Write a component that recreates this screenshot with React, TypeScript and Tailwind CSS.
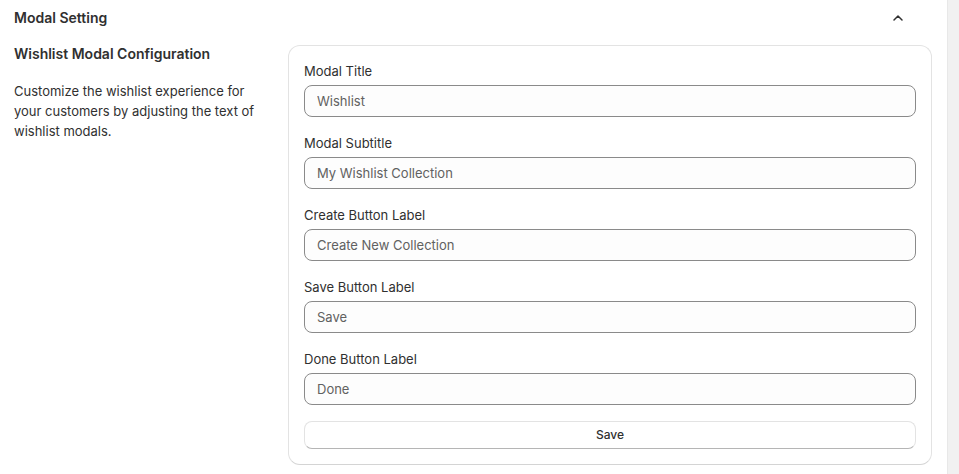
import { ChevronUp } from 'lucide-react';

const fields = [
  { label: 'Modal Title', value: 'Wishlist' },
  { label: 'Modal Subtitle', value: 'My Wishlist Collection' },
  { label: 'Create Button Label', value: 'Create New Collection' },
  { label: 'Save Button Label', value: 'Save' },
  { label: 'Done Button Label', value: 'Done' },
];

export default function App() {
  return (
    <div className="flex w-full h-[474px] bg-white text-[#303030] font-['Inter','Noto_Sans',sans-serif] overflow-hidden">
      <div className="w-[947px] shrink-0 bg-white">
        {/* header */}
        <div className="h-9 flex items-center justify-between pl-[14px] pr-[41px]">
          <h2 className="text-[14px] font-semibold leading-5">Modal Setting</h2>
          <ChevronUp className="w-4 h-4 text-[#303030]" strokeWidth={2.25} />
        </div>

        <div className="flex items-start pt-2 pl-[14px] pr-[15px]">
          {/* left description */}
          <div className="w-[274px] shrink-0 pr-4">
            <h3 className="text-[14px] font-semibold leading-5">Wishlist Modal Configuration</h3>
            <p className="mt-[17px] text-[13px] leading-5 text-[#303030]">
              Customize the wishlist experience for your customers by adjusting the text of wishlist modals.
            </p>
          </div>

          {/* form card */}
          <div className="mt-px flex-1 rounded-xl border border-[#e3e3e3] border-b-[#d4d4d4] bg-white p-[15px] flex flex-col gap-4">
            {fields.map((f) => (
              <div key={f.label} className="flex flex-col gap-1">
                <label className="text-[13px] leading-5 text-[#303030]">{f.label}</label>
                <input
                  defaultValue={f.value}
                  className="h-8 w-full rounded-lg border border-[#8a8a8a] bg-[#fdfdfd] px-3 text-[13px] text-[#616161] outline-none"
                />
              </div>
            ))}
            <button className="h-7 w-full rounded-lg border border-[#e3e3e3] border-b-[#b5b5b5] bg-white text-[12px] font-medium text-[#303030]">
              Save
            </button>
          </div>
        </div>
      </div>
      {/* scrollbar track */}
      <div className="flex-1 bg-[#f1f1f1] border-l border-[#e8e8e8]" />
    </div>
  );
}
